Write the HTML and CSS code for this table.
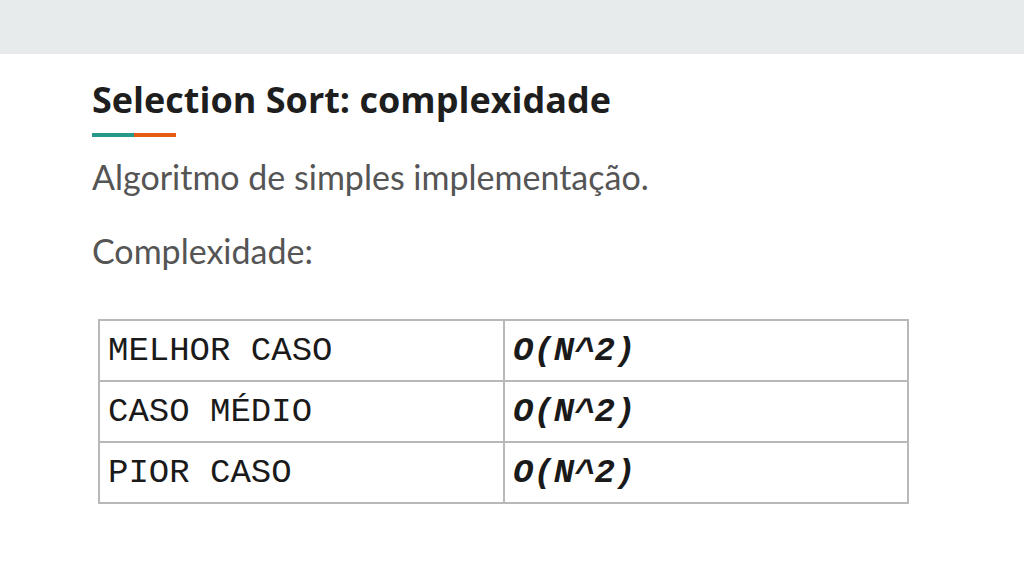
FILE: index.html
```html
<!DOCTYPE html>
<html lang="pt">
<head>
<meta charset="utf-8">
<title>Selection Sort: complexidade</title>
<link rel="stylesheet" href="styles.css">
</head>
<body>
<div class="topbar"></div>
<main class="slide">
  <h1 class="title">Selection Sort: complexidade</h1>
  <div class="accent"><span class="teal"></span><span class="orange"></span></div>
  <p class="text">Algoritmo de simples implementação.</p>
  <p class="text">Complexidade:</p>
  <table class="cx">
    <tr><td class="case">MELHOR CASO</td><td class="val">O(N^2)</td></tr>
    <tr><td class="case">CASO MÉDIO</td><td class="val">O(N^2)</td></tr>
    <tr><td class="case">PIOR CASO</td><td class="val">O(N^2)</td></tr>
  </table>
</main>
</body>
</html>
```
FILE: styles.css
```css
html, body {
  margin: 0;
  padding: 0;
  background: #ffffff;
}
.topbar {
  height: 54px;
  background: #e8ebeb;
}
.slide {
  padding: 0 0 0 92px;
}
.title {
  margin: 26px 0 0 0;
  font-family: "Open Sans", "Lato", sans-serif;
  font-weight: 700;
  font-size: 36px;
  line-height: 40px;
  color: #1e1e1e;
  letter-spacing: 0;
}
.accent {
  display: flex;
  margin-top: 13px;
  height: 4px;
  width: 84px;
}
.accent .teal { flex: 1; background: #26998a; }
.accent .orange { flex: 1; background: #e65c12; }
.text {
  margin: 20px 0 0 0;
  font-family: "Lato", sans-serif;
  font-size: 34px;
  line-height: 40px;
  color: #555555;
}
.text + .text {
  margin-top: 34px;
}
.cx {
  margin: 48px 0 0 6px;
  border-collapse: collapse;
  width: 811px;
}
.cx td {
  border: 2px solid #b8b8b8;
  height: 59px;
  padding: 0 0 0 8px;
  font-family: "Liberation Mono", "Courier New", monospace;
  font-size: 34px;
  color: #1a1a1a;
  vertical-align: middle;
}
.cx td.case { width: 395px; }
.cx td.val {
  font-weight: 700;
  font-style: italic;
}
```
